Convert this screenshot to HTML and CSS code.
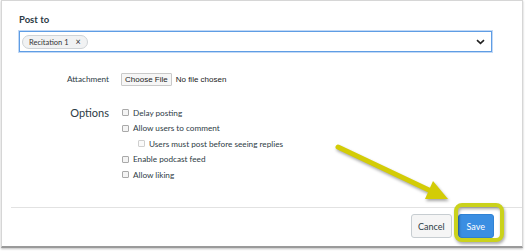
FILE: index.html
```html
<!DOCTYPE html>
<html lang="en">
<head>
    <meta charset="UTF-8">
    <title>Post to</title>
    <link rel="stylesheet" href="styles.css">
</head>
<body>
    <div class="frame">
        <div class="content">
            <div class="field-title">Post to</div>
            <div class="select">
                <span class="chip">Recitation 1 <span class="chip-x">&times;</span></span>
                <svg class="chevron" width="9" height="6" viewBox="0 0 9 6"><path d="M1 1.2 L4.5 4.4 L8 1.2" fill="none" stroke="#222" stroke-width="1.6"/></svg>
            </div>

            <div class="row attach">
                <div class="label">Attachment</div>
                <div class="file">
                    <span class="file-btn">Choose File</span>
                    <span class="file-name">No file chosen</span>
                </div>
            </div>

            <div class="row options">
                <div class="label big">Options</div>
                <div class="checks">
                    <div class="check"><span class="box"></span>Delay posting</div>
                    <div class="check"><span class="box"></span>Allow users to comment</div>
                    <div class="check sub"><span class="box off"></span>Users must post before seeing replies</div>
                    <div class="check"><span class="box"></span>Enable podcast feed</div>
                    <div class="check"><span class="box"></span>Allow liking</div>
                </div>
            </div>
        </div>

        <div class="footer">
            <button class="btn cancel">Cancel</button>
            <button class="btn save">Save</button>
        </div>
    </div>

    <!-- annotation: arrow + highlight ring -->
    <svg class="annot" width="527" height="251" viewBox="0 0 527 251">
        <line x1="338" y1="147" x2="431" y2="191" stroke="#d3cc06" stroke-width="5" stroke-linecap="round"/>
        <polygon points="448,199 425,199 433,181" fill="#d3cc06"/>
        <rect x="456" y="205" width="46" height="35" rx="6" fill="none" stroke="#cad21c" stroke-width="4"/>
    </svg>
</body>
</html>
```

FILE: styles.css
```css
body {margin: 0; position: relative; width: 527px; height: 251px; background: #fff; font-family: Lato, "Noto Sans", sans-serif; color: #2d3b45;}

.frame {margin-left: 1px; width: 520px; height: 245px; border: 1px solid #d6d6d6; border-bottom: 2px solid #9a9a9a; box-shadow: 0 1px 2px rgba(0,0,0,.25); display: flex; flex-direction: column;}
.content {padding: 11px 30px 0 17px;}

.field-title {font-size: 9.5px; font-weight: bold; line-height: 16px; color: #2d3b45;}
.select {margin-top: 3px; height: 19px; border: 1px solid #5f9de4; box-shadow: 0 0 0 1px rgba(120,170,235,.45); display: flex; align-items: center; justify-content: space-between; padding: 0 6px 0 2px;}
.chip {height: 14px; box-sizing: border-box; border: 1px solid #cfd3d6; border-radius: 7px; background: #f1f2f3; font-size: 7.5px; line-height: 12px; padding: 0 6px 0 6px; color: #333;}
.chip-x {font-size: 9px; margin-left: 5px; color: #333;}

.row {display: flex;}
.label {width: 90px; padding-right: 12px; text-align: right; font-size: 8.2px; color: #2d3b45;}
.label.big {font-size: 11px; line-height: 16px;}

.attach {margin-top: 20px; align-items: center; height: 14px;}
.file {display: flex; align-items: center; font-family: "Liberation Sans", Arial, sans-serif; font-size: 8px; color: #222;}
.file-btn {border: 1px solid #c9c9c9; background: #f6f6f6; padding: 1px 3px; margin-right: 4px; border-radius: 1px;}

.options {margin-top: 19px;}
.options .label {padding-top: 0;}
.checks {display: flex; flex-direction: column; margin-top: 0;}
.check {height: 15.5px; display: flex; align-items: center; font-size: 8.2px; color: #2d3b45;}
.check.sub {padding-left: 16px;}
.box {width: 5px; height: 5px; border: 1px solid #a9a9a9; border-radius: 1px; background: #f4f4f4; margin: 0 4px 0 1px;}
.box.off {border-color: #cfcfcf; background: #fafafa;}

.footer {margin-top: auto; margin-left: 9px; border-top: 1px solid #e2e2e2; padding: 6px 28px 8px 0; display: flex; justify-content: flex-end; gap: 6px;}
.btn {height: 24px; font-family: Lato, "Noto Sans", sans-serif; font-size: 9px; border-radius: 3px; cursor: pointer;}
.cancel {background: #f5f5f5; border: 1px solid #c7cdd1; color: #2d3b45; padding: 0 6px;}
.save {background: #3a8ee2; border: 1px solid #2f82d4; color: #fff; padding: 0 8px;}

.annot {position: absolute; left: 0; top: 0; pointer-events: none; filter: drop-shadow(1px 2px 1.5px rgba(0,0,0,.35));}
```
